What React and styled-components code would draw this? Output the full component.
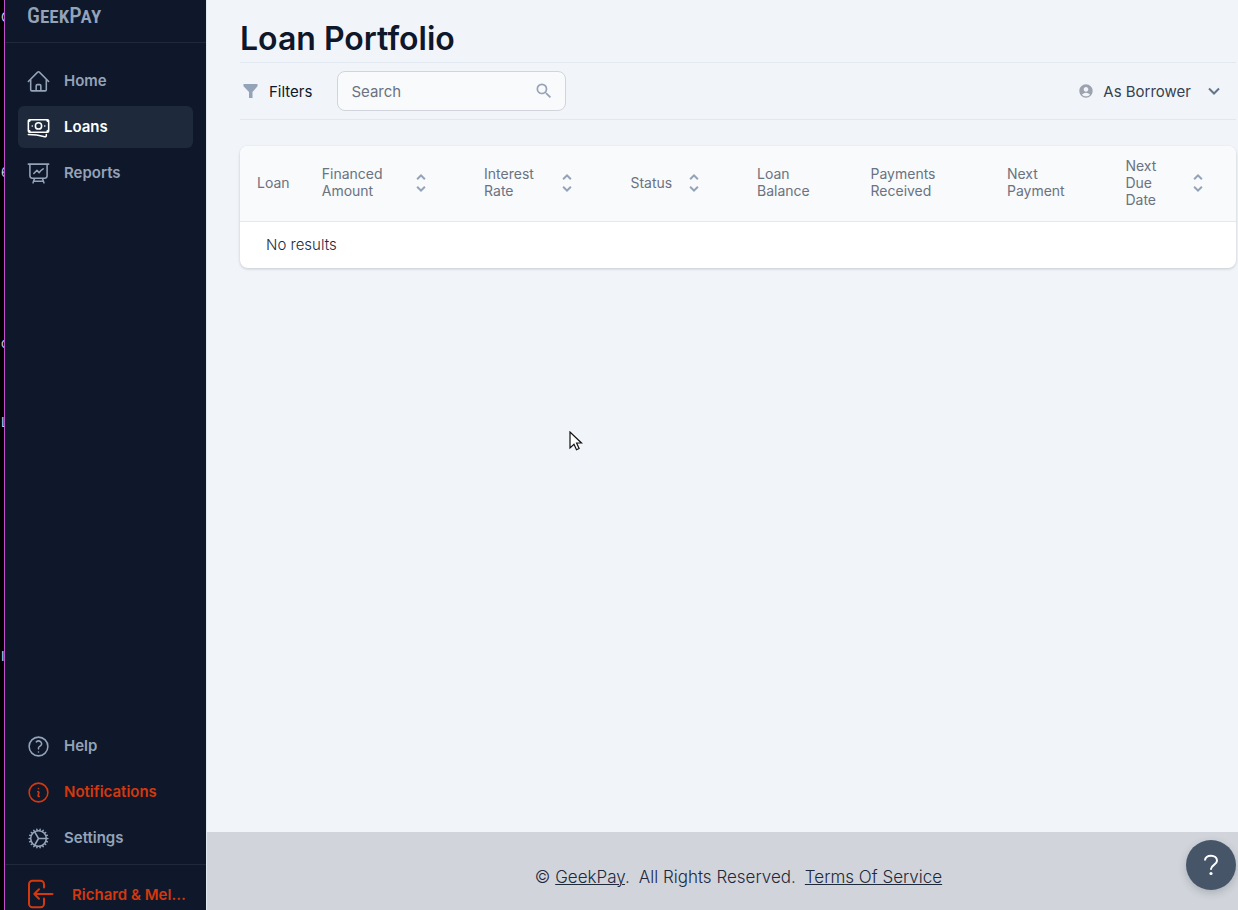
import React, { useState } from 'react';
import styled, { createGlobalStyle } from 'styled-components';
import {
  HiOutlineHome,
  HiOutlineBanknotes,
  HiOutlinePresentationChartLine,
  HiOutlineQuestionMarkCircle,
  HiOutlineInformationCircle,
  HiOutlineCog,
} from 'react-icons/hi2';
import { MdSearch, MdAccountCircle, MdUnfoldMore } from 'react-icons/md';

const mainLinks = [
  { label: 'Home', icon: HiOutlineHome },
  { label: 'Loans', icon: HiOutlineBanknotes },
  { label: 'Reports', icon: HiOutlinePresentationChartLine },
];

const bottomLinks = [
  { label: 'Help', icon: HiOutlineQuestionMarkCircle },
  { label: 'Notifications', icon: HiOutlineInformationCircle, alert: true },
  { label: 'Settings', icon: HiOutlineCog },
];

const columns = [
  { label: 'Loan', width: '6.5%' },
  { label: 'Financed Amount', width: '16.3%', sort: true },
  { label: 'Interest Rate', width: '14.7%', sort: true },
  { label: 'Status', width: '12.7%', sort: true },
  { label: 'Loan Balance', width: '11.4%' },
  { label: 'Payments Received', width: '13.7%' },
  { label: 'Next Payment', width: '11.9%' },
  { label: 'Next Due Date', width: '12.8%', sort: true },
];

// letters of the window behind, cut by its edge
const edgeLetters = [
  { text: 'C', height: 155 },
  { text: '6', height: 171 },
  { text: 'c', height: 79 },
  { text: 'L', height: 234 },
  { text: 'I', height: 34 },
];

const App = () => {
  const [active, setActive] = useState('Loans');
  const [search, setSearch] = useState('');

  return (
    <>
      <GlobalStyle />
      <Page>
        <Edge aria-hidden="true">
          {edgeLetters.map(({ text, height }) => (
            <EdgeLetter key={text} $height={height}>{text}</EdgeLetter>
          ))}
        </Edge>

        <Sidebar>
          <Brand href="#">GeekPay</Brand>
          <Nav>
            {mainLinks.map(({ label, icon: Icon }) => (
              <NavLink key={label} href="#" $active={active === label} onClick={() => setActive(label)}>
                <Icon />
                <NavText>{label}</NavText>
              </NavLink>
            ))}
            <Spacer />
            {bottomLinks.map(({ label, icon: Icon, alert }) => (
              <NavLink key={label} href="#" $alert={alert} $active={active === label} onClick={() => setActive(label)}>
                <Icon />
                <NavText>{label}</NavText>
              </NavLink>
            ))}
          </Nav>
          <UserLink href="#">
            <svg width="28" height="30" viewBox="0 0 28 30" fill="none" stroke="currentColor" strokeWidth="2" strokeLinecap="round" strokeLinejoin="round">
              <path d="M17 8.500V5.200a3.500 3.500 0 0 0-3.500-3.500H5.500A3.500 3.500 0 0 0 2 5.200v19.600a3.500 3.500 0 0 0 3.500 3.500h8a3.500 3.500 0 0 0 3.500-3.500v-5.300M12 10.300L7.300 15l4.700 4.700M7.300 15H25.500" />
            </svg>
            <UserName>Richard &amp; Melissa</UserName>
          </UserLink>
        </Sidebar>

        <Main>
          <Content>
            <Title>Loan Portfolio</Title>
            <Toolbar>
              <FilterButton type="button">
                <svg width="16" height="16" viewBox="0 0 16 16" fill="currentColor">
                  <path d="M.5 1h14v2.200L9.500 9v6H6V9L.5 3.200z" />
                </svg>
                Filters
              </FilterButton>
              <SearchBox>
                <input
                  type="text"
                  aria-label="Search"
                  placeholder="Search"
                  value={search}
                  onChange={(e) => setSearch(e.target.value)}
                />
                <MdSearch />
              </SearchBox>
              <RoleButton type="button">
                <MdAccountCircle size={16} />
                As Borrower
                <svg width="20" height="20" viewBox="0 0 20 20" fill="none" stroke="currentColor" strokeWidth="2">
                  <path d="M5 7.500l5 5 5-5" />
                </svg>
              </RoleButton>
            </Toolbar>

            <Card>
              <Table>
                <thead>
                  <tr>
                    {columns.map(({ label, width, sort }) => (
                      <HeadCell key={label} $width={width}>
                        <HeadWrap>
                          <HeadText>{label}</HeadText>
                          {sort && (
                            <SortButton type="button" aria-label={`Sort by ${label}`}>
                              <MdUnfoldMore />
                            </SortButton>
                          )}
                        </HeadWrap>
                      </HeadCell>
                    ))}
                  </tr>
                </thead>
                <tbody>
                  <tr>
                    <Empty colSpan={columns.length}>No results</Empty>
                  </tr>
                </tbody>
              </Table>
            </Card>
          </Content>

          <Footer>
            <span>© <a href="#">GeekPay</a>.</span>
            <span>All Rights Reserved.</span>
            <a href="#">Terms Of Service</a>
          </Footer>
        </Main>

        <HelpButton type="button" aria-label="Open help">
          <svg width="18" height="24" viewBox="0 0 18 24" fill="none" stroke="currentColor" strokeWidth="2">
            <path d="M3 7.500C3 4.500 5.500 2.800 9 2.800s6 1.900 6 4.900c0 4-6 4.300-6 8.300v.8" />
            <circle cx="9" cy="20.500" r="1.600" fill="currentColor" stroke="none" />
          </svg>
        </HelpButton>

        <Pointer width="14" height="20" viewBox="0 0 14 20" aria-hidden="true">
          <path d="M1 1v16l4-3.700 2.500 5.400 2.600-1.200L7.600 12H12.500z" fill="#fff" stroke="#111" strokeWidth="1.200" />
        </Pointer>
      </Page>
    </>
  );
};

export default App;

const GlobalStyle = createGlobalStyle`
  * {
    box-sizing: border-box;
  }

  body {
    margin: 0;
    background: #f1f5f9;
    color: #1e293b;
    font-family: Inter, "Liberation Sans", sans-serif;
    font-size: 15px;
  }

  button, input {
    font: inherit;
  }

  button {
    cursor: pointer;
  }
`;

const Page = styled.div`
  display: flex;
  min-height: 100vh;
`;

const Edge = styled.div`
  display: flex;
  flex-direction: column;
  width: 5px;
  height: 100vh;
  padding-top: 8px;
  overflow: hidden;
  background: #000;
  border-right: 1px solid #c04fcb;
`;

const EdgeLetter = styled.span`
  height: ${({ $height }) => $height}px;
  padding-left: 1px;
  color: #cbd5e1;
  font-size: 13px;
  line-height: 18px;
`;

const Sidebar = styled.aside`
  display: flex;
  flex-direction: column;
  flex: none;
  width: 202px;
  height: 100vh;
  overflow: hidden;
  background: #0f172a;
  border-right: 1px solid #e2e8f0;
`;

const Brand = styled.a`
  display: flex;
  align-items: flex-end;
  flex: none;
  height: 43px;
  padding: 0 22px 14px;
  border-bottom: 1px solid #1e293b;
  color: #94a3b8;
  font-family: "Liberation Sans Narrow", "Roboto Condensed", "Open Sans Condensed", Roboto, sans-serif;
  font-size: 22px;
  font-weight: 500;
  font-variant: small-caps;
  line-height: 24px;
  text-decoration: none;
`;

const Nav = styled.nav`
  display: flex;
  flex-direction: column;
  flex: 1;
  gap: 4px;
  padding: 17px 13px 5px;
`;

const NavLink = styled.a`
  display: flex;
  align-items: center;
  gap: 13px;
  height: 42px;
  padding: 0 8px;
  border-radius: 6px;
  background: ${({ $active }) => ($active ? '#1e293b' : 'transparent')};
  color: ${({ $active, $alert }) => ($alert ? '#d4380d' : $active ? '#fff' : '#94a3b8')};
  font-weight: 600;
  text-decoration: none;

  svg {
    width: 25px;
    height: 25px;
  }
`;

const NavText = styled.span`
  padding-bottom: 2px;
`;

const Spacer = styled.div`
  flex: 1;
`;

const UserLink = styled.a`
  display: flex;
  align-items: center;
  flex: none;
  gap: 17px;
  height: 46px;
  padding: 13px 20px 0 22px;
  border-top: 1px solid #1e293b;
  color: #d4380d;
  font-weight: 600;
  text-decoration: none;

  svg {
    flex: none;
  }
`;

const UserName = styled.span`
  overflow: hidden;
  text-overflow: ellipsis;
  white-space: nowrap;
`;

const Main = styled.main`
  display: flex;
  flex-direction: column;
  flex: 1;
  min-width: 0;
`;

const Content = styled.div`
  flex: 1;
  padding: 16px 2px 24px 33px;
`;

const Title = styled.h1`
  margin: 0;
  color: #0f172a;
  font-size: 32px;
  font-weight: 600;
  line-height: 46px;
`;

const Toolbar = styled.div`
  display: flex;
  align-items: center;
  height: 58px;
  margin-bottom: 26px;
  border-top: 1px solid #e2e8f0;
  border-bottom: 1px solid #e2e8f0;
`;

const FilterButton = styled.button`
  display: flex;
  align-items: center;
  gap: 10px;
  padding: 0 25px 0 3px;
  border: none;
  background: none;
  color: #0f172a;

  svg {
    color: #94a3b8;
  }
`;

const SearchBox = styled.label`
  display: flex;
  align-items: center;
  width: 229px;
  height: 40px;
  padding: 0 11px 0 13px;
  border: 1px solid #d1d5db;
  border-radius: 8px;
  background: #f8fafc;

  input {
    flex: 1;
    min-width: 0;
    padding: 0;
    border: none;
    outline: none;
    background: none;
    color: #1e293b;
  }

  input::placeholder {
    color: #6b7280;
    opacity: 1;
  }

  svg {
    width: 20px;
    height: 20px;
    color: #94a3b8;
  }
`;

const RoleButton = styled.button`
  display: flex;
  align-items: center;
  gap: 9px;
  margin-left: auto;
  padding: 0 12px 0 0;
  border: none;
  background: none;
  color: #374151;

  svg:first-child {
    color: #9ca3af;
  }

  svg:last-child {
    margin-left: 4px;
    color: #64748b;
  }
`;

const Card = styled.div`
  overflow: hidden;
  border-radius: 8px;
  background: #fff;
  box-shadow: 0 1px 3px rgba(15, 23, 42, 0.2);
`;

const Table = styled.table`
  width: 100%;
  table-layout: fixed;
  border-collapse: collapse;
`;

const HeadCell = styled.th`
  width: ${({ $width }) => $width};
  height: 75px;
  padding: 0 34px 0 17px;
  border-bottom: 1px solid #e5e7eb;
  background: #f8fafc;
  color: #6b7280;
  font-size: 14px;
  font-weight: 400;
  line-height: 17px;
  text-align: left;

  &:first-child {
    padding-right: 0;
  }

  &:last-child {
    padding-right: 26px;
  }
`;

const HeadWrap = styled.div`
  display: flex;
  align-items: center;
  justify-content: space-between;
  gap: 10px;
`;

const HeadText = styled.span`
  padding-bottom: 2px;
`;

const SortButton = styled.button`
  display: flex;
  padding: 0;
  border: none;
  background: none;
  color: #94a3b8;

  svg {
    width: 24px;
    height: 24px;
  }
`;

const Empty = styled.td`
  height: 47px;
  padding: 0 26px;
  color: #1e293b;
  font-weight: 300;
`;

const Footer = styled.footer`
  display: flex;
  align-items: center;
  justify-content: center;
  gap: 9px;
  height: 78px;
  padding: 12px 0 0 32px;
  background: #d1d5db;
  font-size: 17px;
  font-weight: 300;

  a {
    color: inherit;
    text-decoration-thickness: 1px;
  }
`;

const HelpButton = styled.button`
  position: fixed;
  right: 2px;
  bottom: 20px;
  display: flex;
  align-items: center;
  justify-content: center;
  width: 50px;
  height: 50px;
  padding: 0;
  border: none;
  border-radius: 50%;
  background: #475569;
  box-shadow: 0 3px 8px rgba(15, 23, 42, 0.2);
  color: #fff;
`;

const Pointer = styled.svg`
  position: fixed;
  top: 431px;
  left: 569px;
  pointer-events: none;
`;
